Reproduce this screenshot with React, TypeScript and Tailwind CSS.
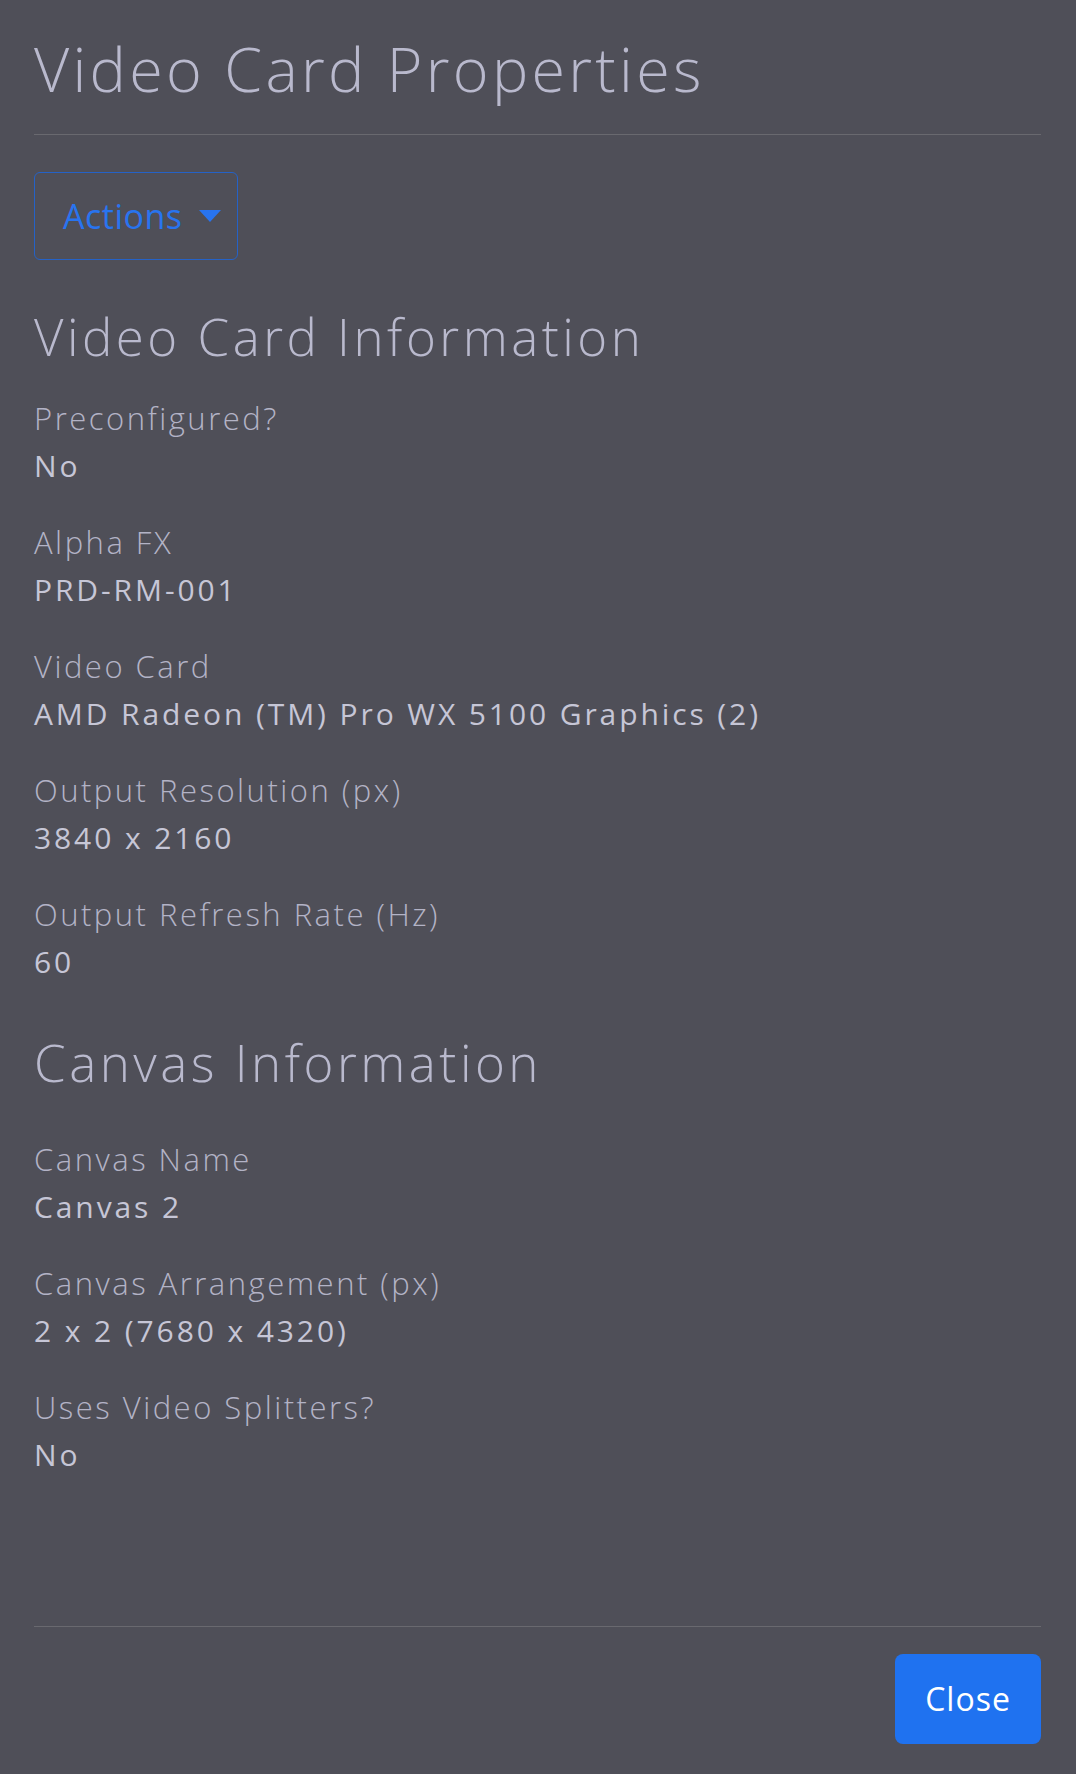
import type { ReactNode } from 'react';

type Field = { label: string; value: string };

const videoCardFields: Field[] = [
  { label: 'Preconfigured?', value: 'No' },
  { label: 'Alpha FX', value: 'PRD-RM-001' },
  { label: 'Video Card', value: 'AMD Radeon (TM) Pro WX 5100 Graphics (2)' },
  { label: 'Output Resolution (px)', value: '3840 x 2160' },
  { label: 'Output Refresh Rate (Hz)', value: '60' },
];

const canvasFields: Field[] = [
  { label: 'Canvas Name', value: 'Canvas 2' },
  { label: 'Canvas Arrangement (px)', value: '2 x 2 (7680 x 4320)' },
  { label: 'Uses Video Splitters?', value: 'No' },
];

function FieldList({ fields }: { fields: Field[] }) {
  return (
    <dl className="flex flex-col gap-[30px]">
      {fields.map((field) => (
        <div key={field.label}>
          <dt className="font-light text-[#b3b3c6] text-[31px] leading-[47px] tracking-[2.5px]">
            {field.label}
          </dt>
          <dd className="text-[#c6c6d6] text-[30px] leading-[47px] tracking-[2.9px]">
            {field.value}
          </dd>
        </div>
      ))}
    </dl>
  );
}

function SectionTitle({ children, className }: { children: ReactNode; className: string }) {
  return (
    <h2 className={`font-light text-[#b9b9cd] text-[51px] leading-[60px] tracking-[3.5px] ${className}`}>
      {children}
    </h2>
  );
}

export default function App() {
  return (
    <div
      className="flex min-h-screen flex-col bg-[#4f4f58] pr-[35px] pl-[34px]"
      style={{ fontFamily: '"Open Sans", "Liberation Sans", sans-serif' }}
    >
      <div className="flex-1 pt-[33px]">
        <h1 className="font-light text-[#b9b9cd] text-[61px] leading-[72px] tracking-[3.3px]">
          Video Card Properties
        </h1>
        <div className="mt-[29px] h-px bg-[#69696f]" />

        <button
          className="mt-[37px] flex h-[88px] w-[204px] items-center rounded-[6px] border border-[#2562c6] pl-[28px] text-[#2874f0] text-[34px] leading-none tracking-[0.5px]"
          type="button"
        >
          <span>Actions</span>
          <svg className="ml-[16px]" height="12" viewBox="0 0 22 12" width="22">
            <polygon fill="#2874f0" points="0,0 22,0 11,12" />
          </svg>
        </button>

        <SectionTitle className="mt-[46px]">Video Card Information</SectionTitle>
        <div className="mt-[29px]">
          <FieldList fields={videoCardFields} />
        </div>

        <SectionTitle className="mt-[47px]">Canvas Information</SectionTitle>
        <div className="mt-[44px]">
          <FieldList fields={canvasFields} />
        </div>
      </div>

      <div className="flex justify-end border-[#69696f] border-t pt-[27px] pb-[30px]">
        <button
          className="h-[90px] w-[146px] rounded-[8px] bg-[#1f72f0] text-[32px] text-white tracking-[1px]"
          type="button"
        >
          Close
        </button>
      </div>
    </div>
  );
}
